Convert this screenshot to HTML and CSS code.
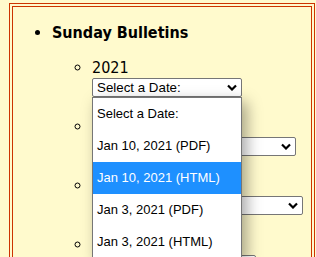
FILE: index.html
```html
<!DOCTYPE html>
<html lang="en">
<head>
    <meta charset="UTF-8">
    <meta name="viewport" content="width=device-width, initial-scale=1.0">
    <title>Sunday Bulletins</title>
    <link rel="stylesheet" href="styles.css">
</head>
<body>
    <div class="page">
        <ul class="sections">
            <li>
                <span class="section-title">Sunday Bulletins</span>
                <ul class="years">
                    <li class="year">
                        <span class="year-label">2021</span>
                        <div class="picker">
                            <select class="date-select w-2021">
                                <option>Select a Date:</option>
                                <option>Jan 10, 2021 (PDF)</option>
                                <option>Jan 10, 2021 (HTML)</option>
                                <option>Jan 3, 2021 (PDF)</option>
                                <option>Jan 3, 2021 (HTML)</option>
                            </select>
                            <svg class="chevron" width="10" height="7" viewBox="0 0 10 7"><polyline points="1,1.5 5,5.5 9,1.5" fill="none" stroke="#000" stroke-width="2.2"/></svg>
                            <div class="dropdown">
                                <div class="option">Select a Date:</div>
                                <div class="option">Jan 10, 2021 (PDF)</div>
                                <div class="option selected">Jan 10, 2021 (HTML)</div>
                                <div class="option">Jan 3, 2021 (PDF)</div>
                                <div class="option">Jan 3, 2021 (HTML)</div>
                            </div>
                        </div>
                    </li>
                    <li class="year">
                        <span class="year-label">2020</span>
                        <div class="picker">
                            <select class="date-select w-2020">
                                <option>Select a Date:</option>
                            </select>
                            <svg class="chevron" width="10" height="7" viewBox="0 0 10 7"><polyline points="1,1.5 5,5.5 9,1.5" fill="none" stroke="#000" stroke-width="2.2"/></svg>
                        </div>
                    </li>
                    <li class="year">
                        <span class="year-label">2019</span>
                        <div class="picker">
                            <select class="date-select w-2019">
                                <option>Select a Date:</option>
                            </select>
                            <svg class="chevron" width="10" height="7" viewBox="0 0 10 7"><polyline points="1,1.5 5,5.5 9,1.5" fill="none" stroke="#000" stroke-width="2.2"/></svg>
                        </div>
                    </li>
                    <li class="year">
                        <span class="year-label">2018</span>
                        <div class="picker">
                            <select class="date-select w-2018">
                                <option>Select a Date:</option>
                            </select>
                            <svg class="chevron" width="10" height="7" viewBox="0 0 10 7"><polyline points="1,1.5 5,5.5 9,1.5" fill="none" stroke="#000" stroke-width="2.2"/></svg>
                        </div>
                    </li>
                </ul>
            </li>
        </ul>
    </div>
</body>
</html>
```

FILE: styles.css
```css
body {
    margin: 0;
    background-color: #fffacd;
    font-family: "DejaVu Sans Condensed", "DejaVu Sans", sans-serif;
    font-size: 16px;
    color: #000;
}

.page {
    margin: 3px 1px 0 9px;
    border: 4px double #cc3300;
}

.sections {
    margin: 16px 0 0;
    padding-left: 39px;
    list-style: disc;
}

.section-title {
    display: block;
    font-weight: bold;
    line-height: 19px;
}

.years {
    margin: 16px 0 0;
    padding-left: 40px;
    list-style: circle;
}

.year {
    line-height: 20px;
    margin-bottom: 20px;
}

.year-label {
    display: block;
}

.picker {
    position: relative;
    width: fit-content;
    height: 19px;
}

.date-select {
    display: block;
    appearance: none;
    height: 19px;
    margin: 0;
    padding: 0 0 0 4px;
    border: 1px solid #767676;
    border-radius: 2px;
    font-family: "Liberation Sans", Arial, sans-serif;
    font-size: 13.33px;
    line-height: 17px;
    background-color: #fff;
    color: #000;
}

.chevron {
    position: absolute;
    right: 5px;
    top: 6px;
    pointer-events: none;
}

.w-2021 { width: 150px; }
.w-2020 { width: 204px; }
.w-2019 { width: 211px; }
.w-2018 { width: 164px; }

.dropdown {
    position: absolute;
    left: 0;
    top: 19px;
    width: 148px;
    height: 160px;
    overflow: hidden;
    background-color: #fff;
    border: 1px solid #767676;
    box-shadow: 5px 5px 14px rgba(0, 0, 0, 0.35);
    font-family: "Liberation Sans", Arial, sans-serif;
    font-size: 13px;
    z-index: 2;
}

.option {
    height: 32px;
    line-height: 32px;
    padding-left: 4px;
    white-space: nowrap;
}

.option.selected {
    background-color: #1e90ff;
    color: #fff;
}
```
